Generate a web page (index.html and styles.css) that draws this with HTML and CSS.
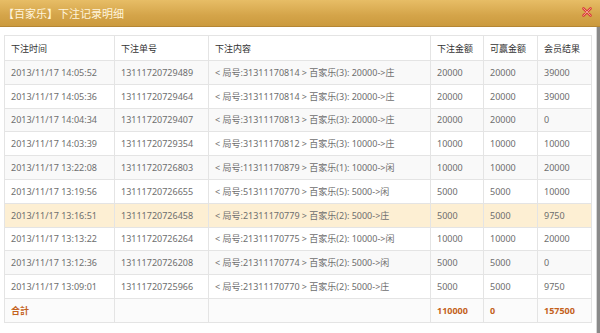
FILE: index.html
```html
<!DOCTYPE html>
<html lang="zh-CN">
<head>
<meta charset="utf-8">
<title>下注记录明细</title>
<link rel="stylesheet" href="styles.css">
</head>
<body>
<div class="dialog">
  <div class="titlebar">
    <span class="title">【百家乐】下注记录明细</span>
    <span class="close" aria-label="关闭">
      <svg width="10" height="10" viewBox="0 0 10 10">
        <path d="M1.5 1.5 L8.5 8.5 M8.5 1.5 L1.5 8.5" stroke="#d9403a" stroke-width="2.6" stroke-linecap="round"/>
        <path d="M1.5 1.5 L8.5 8.5 M8.5 1.5 L1.5 8.5" stroke="#f59a90" stroke-width="1" stroke-linecap="round"/>
      </svg>
    </span>
  </div>
  <div class="content">
    <table class="records">
      <colgroup>
        <col class="c-time"><col class="c-no"><col class="c-detail"><col class="c-amt"><col class="c-valid"><col class="c-result">
      </colgroup>
      <thead>
        <tr><th>下注时间</th><th>下注单号</th><th>下注内容</th><th>下注金额</th><th>可赢金额</th><th>会员结果</th></tr>
      </thead>
      <tbody>
        <tr class="odd"><td>2013/11/17 14:05:52</td><td>13111720729489</td><td>&lt; 局号:31311170814 &gt; 百家乐(3): 20000-&gt;庄</td><td>20000</td><td>20000</td><td>39000</td></tr>
        <tr><td>2013/11/17 14:05:36</td><td>13111720729464</td><td>&lt; 局号:31311170814 &gt; 百家乐(3): 20000-&gt;庄</td><td>20000</td><td>20000</td><td>39000</td></tr>
        <tr class="odd"><td>2013/11/17 14:04:34</td><td>13111720729407</td><td>&lt; 局号:31311170813 &gt; 百家乐(3): 20000-&gt;庄</td><td>20000</td><td>20000</td><td>0</td></tr>
        <tr><td>2013/11/17 14:03:39</td><td>13111720729354</td><td>&lt; 局号:31311170812 &gt; 百家乐(3): 10000-&gt;庄</td><td>10000</td><td>10000</td><td>10000</td></tr>
        <tr class="odd"><td>2013/11/17 13:22:08</td><td>13111720726803</td><td>&lt; 局号:11311170879 &gt; 百家乐(1): 10000-&gt;闲</td><td>10000</td><td>10000</td><td>20000</td></tr>
        <tr><td>2013/11/17 13:19:56</td><td>13111720726655</td><td>&lt; 局号:51311170770 &gt; 百家乐(5): 5000-&gt;闲</td><td>5000</td><td>5000</td><td>10000</td></tr>
        <tr class="hl"><td>2013/11/17 13:16:51</td><td>13111720726458</td><td>&lt; 局号:21311170779 &gt; 百家乐(2): 5000-&gt;庄</td><td>5000</td><td>5000</td><td>9750</td></tr>
        <tr><td>2013/11/17 13:13:22</td><td>13111720726264</td><td>&lt; 局号:21311170775 &gt; 百家乐(2): 10000-&gt;闲</td><td>10000</td><td>10000</td><td>20000</td></tr>
        <tr class="odd"><td>2013/11/17 13:12:36</td><td>13111720726208</td><td>&lt; 局号:21311170774 &gt; 百家乐(2): 5000-&gt;闲</td><td>5000</td><td>5000</td><td>0</td></tr>
        <tr><td>2013/11/17 13:09:01</td><td>13111720725966</td><td>&lt; 局号:21311170770 &gt; 百家乐(2): 5000-&gt;庄</td><td>5000</td><td>5000</td><td>9750</td></tr>
        <tr class="total"><td>合計</td><td></td><td></td><td class="sum">110000</td><td class="sum">0</td><td class="sum">157500</td></tr>
      </tbody>
    </table>
  </div>
</div>
</body>
</html>
```

FILE: styles.css
```css
html, body {
  margin: 0;
  padding: 0;
}
body {
  width: 600px;
  height: 333px;
  overflow: hidden;
  background: #8a8a8a;
  font-family: "Noto Sans", "Noto Sans CJK SC", sans-serif;
}
.dialog {
  width: 600px;
  height: 333px;
  display: flex;
  flex-direction: column;
}
.titlebar {
  height: 26px;
  flex: none;
  display: flex;
  align-items: center;
  justify-content: space-between;
  padding: 0 8px 0 3px;
  background: linear-gradient(#e7bd66, #d4a449 60%, #cb9a3e);
  border-bottom: 1px solid #b58633;
}
.title {
  font-size: 11px;
  color: #fff4dc;
  letter-spacing: 0;
}
.close {
  display: flex;
  margin-top: -2px;
}
.content {
  flex: 1;
  background: #fff;
  margin-right: 3px;
  border-right: 1px solid #d6d6d6;
  padding: 8px 0 0 4px;
}
.records {
  width: 587px;
  border-collapse: collapse;
  table-layout: fixed;
  font-size: 9px;
  color: #6e6e6e;
  border: 1px solid #e2e2e2;
}
.c-time { width: 110px; }
.c-no { width: 94px; }
.c-detail { width: 222px; }
.c-amt { width: 53px; }
.c-valid { width: 54px; }
.c-result { width: 54px; }
.records th,
.records td {
  border: 1px solid #e4e4e4;
  text-align: left;
  padding: 0 0 0 6px;
  white-space: nowrap;
  overflow: hidden;
}
.records th {
  height: 24px;
  font-weight: normal;
  color: #333;
  background: #fff;
}
.records td {
  height: 22.8px;
}
.records tr.odd td {
  background: #f9f9f9;
}
.records tr.hl td {
  background: #fdefd3;
}
.records tr.total td {
  color: #c4621c;
  background: #fbfbfb;
  font-weight: bold;
}
```
